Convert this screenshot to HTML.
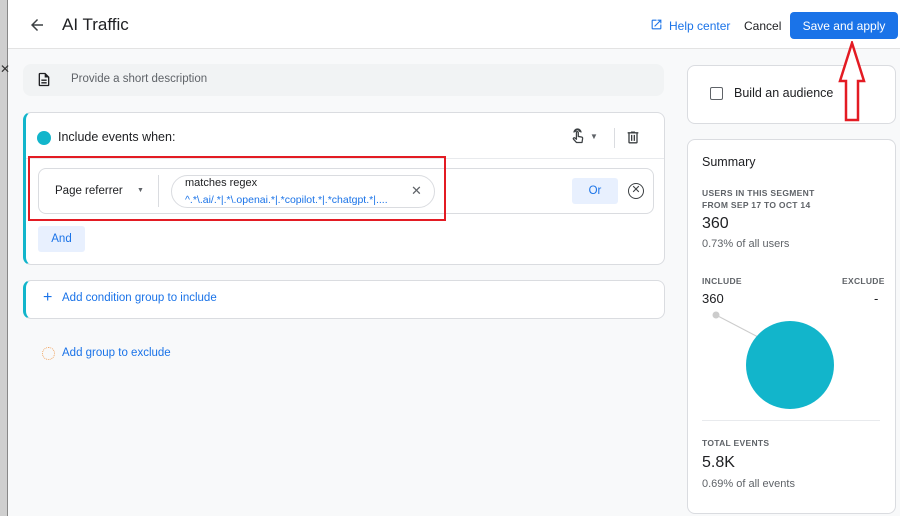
<!DOCTYPE html>
<html><head><style>
*{box-sizing:border-box;margin:0;padding:0}
body{width:900px;height:516px;overflow:hidden;background:#f8f9fa;font-family:"Liberation Sans",Arial,sans-serif;position:relative;color:#202124}
.a{position:absolute}
.card{position:absolute;background:#fff;border:1px solid #dadce0;border-radius:8px}
.blue{color:#1a73e8}
.cap{font-size:8.5px;color:#5f6368;letter-spacing:.3px;font-weight:bold}
</style></head><body>
<div class="a" style="left:0;top:0;width:8px;height:516px;background:#cfcfcf;border-right:1px solid #888"></div>
<div class="a" style="left:0;top:62px;font-size:12px;color:#333">✕</div>
<div class="a" style="left:8px;top:0;width:892px;height:49px;background:#fff;border-bottom:1px solid #e3e3e3"></div>
<svg class="a" style="left:28px;top:16px" width="18" height="18" viewBox="0 0 24 24"><path d="M20 11H7.8l5.6-5.6L12 4l-8 8 8 8 1.4-1.4L7.8 13H20z" fill="#3c4043"/></svg>
<div class="a" style="left:62px;top:15px;font-size:17px">AI Traffic</div>
<svg class="a" style="left:650px;top:18px" width="13" height="13" viewBox="0 0 24 24"><path d="M19 19H5V5h7V3H5a2 2 0 0 0-2 2v14a2 2 0 0 0 2 2h14a2 2 0 0 0 2-2v-7h-2zM14 3v2h3.6l-9.8 9.8 1.4 1.4L19 6.4V10h2V3z" fill="#1a73e8"/></svg>
<div class="a blue" style="left:669px;top:19px;font-size:12px">Help center</div>
<div class="a" style="left:744px;top:19px;font-size:12px">Cancel</div>
<div class="a" style="left:790px;top:12px;width:108px;height:27px;background:#1a73e8;border-radius:4px;color:#fff;font-size:12px;text-align:center;line-height:28px">Save and apply</div>

<div class="a" style="left:23px;top:64px;width:641px;height:32px;background:#f1f3f4;border-radius:8px"></div>
<svg class="a" style="left:36px;top:71px" width="16" height="17" viewBox="0 0 24 24"><path d="M14 2H6a2 2 0 0 0-2 2v16a2 2 0 0 0 2 2h12a2 2 0 0 0 2-2V8zm4 18H6V4h7v5h5zM8 12h8v2H8zm0 4h8v2H8z" fill="#202124"/></svg>
<div class="a" style="left:71px;top:73px;font-size:11.5px;color:#5f6368">Provide a short description</div>

<div class="card" style="left:23px;top:112px;width:642px;height:153px;border-left:3px solid #12b5cb"></div>
<div class="a" style="left:37px;top:131px;width:14px;height:14px;border-radius:50%;background:#12b5cb"></div>
<div class="a" style="left:58px;top:130px;font-size:12.5px">Include events when:</div>
<svg class="a" style="left:569px;top:128px" width="17" height="19" viewBox="0 0 24 26"><path d="M9 5a3 3 0 1 1 6 0M7 6a5 5 0 0 1 10 0M10.5 20l-4-4.5a1.3 1.3 0 0 1 1.9-1.8L10.5 15.5V6a1.3 1.3 0 0 1 2.6 0v5.5l4.5.8a2 2 0 0 1 1.6 2.2l-.8 5.5H10.5z" fill="none" stroke="#3c4043" stroke-width="1.8" stroke-linejoin="round"/></svg>
<div class="a" style="left:590px;top:132px;font-size:8px;color:#5f6368">▼</div>
<div class="a" style="left:614px;top:128px;width:1px;height:20px;background:#dadce0"></div>
<svg class="a" style="left:625px;top:129px" width="16" height="17" viewBox="0 0 24 24"><path d="M15 4V3H9v1H4v2h1v13a2 2 0 0 0 2 2h10a2 2 0 0 0 2-2V6h1V4zm2 15H7V6h10zM9 8h2v9H9zm4 0h2v9h-2z" fill="#3c4043"/></svg>
<div class="a" style="left:26px;top:158px;width:638px;height:1px;background:#e8eaed"></div>

<div class="a" style="left:38px;top:168px;width:616px;height:46px;border:1px solid #dadce0;border-radius:8px;background:#fff"></div>
<div class="a" style="left:55px;top:185px;font-size:11.5px">Page referrer</div>
<div class="a" style="left:137px;top:187px;font-size:7px;color:#5f6368">▼</div>
<div class="a" style="left:158px;top:175px;width:1px;height:32px;background:#dadce0"></div>
<div class="a" style="left:171px;top:175px;width:264px;height:33px;border:1px solid #dadce0;border-radius:17px"></div>
<div class="a" style="left:185px;top:177px;font-size:11px">matches regex</div>
<div class="a blue" style="left:185px;top:194px;font-size:10.5px">^.*\.ai/.*|.*\.openai.*|.*copilot.*|.*chatgpt.*|....</div>
<div class="a" style="left:411px;top:183px;font-size:13px;color:#5f6368">✕</div>
<div class="a blue" style="left:572px;top:178px;width:46px;height:26px;background:#e8f0fe;border-radius:3px;text-align:center;line-height:26px;font-size:11.5px">Or</div>
<div class="a" style="left:628px;top:183px;width:16px;height:16px;border:1.5px solid #3c4043;border-radius:50%;font-size:11px;line-height:13px;text-align:center;color:#3c4043">✕</div>
<div class="a" style="left:28px;top:156px;width:418px;height:65px;border:2.5px solid #e31b23"></div>
<div class="a blue" style="left:38px;top:226px;width:47px;height:26px;background:#e8f0fe;border-radius:3px;text-align:center;line-height:26px;font-size:11.5px">And</div>

<div class="card" style="left:23px;top:280px;width:642px;height:39px;border-left:3px solid #12b5cb"></div>
<div class="a blue" style="left:43px;top:289px;font-size:16px">+</div>
<div class="a blue" style="left:62px;top:292px;font-size:11.5px">Add condition group to include</div>
<div class="a" style="left:42px;top:347px;width:13px;height:13px;border:1.5px dotted #f0a868;border-radius:50%"></div>
<div class="a blue" style="left:62px;top:347px;font-size:11.5px">Add group to exclude</div>

<div class="card" style="left:687px;top:65px;width:209px;height:59px"></div>
<div class="a" style="left:710px;top:87px;width:13px;height:13px;border:1.5px solid #5f6368;border-radius:2px"></div>
<div class="a" style="left:734px;top:86px;font-size:12.5px">Build an audience</div>
<svg class="a" style="left:838px;top:41px" width="28" height="82" viewBox="0 0 28 82"><path d="M14 2 L26 40 L20 40 L20 79 L8 79 L8 40 L2 40 Z" fill="#fff" stroke="#e31b23" stroke-width="2.5"/></svg>

<div class="card" style="left:687px;top:139px;width:209px;height:375px"></div>
<div class="a" style="left:702px;top:155px;font-size:12.5px">Summary</div>
<div class="a cap" style="left:702px;top:187px;line-height:12px">USERS IN THIS SEGMENT<br>FROM SEP 17 TO OCT 14</div>
<div class="a" style="left:702px;top:215px;font-size:16px">360</div>
<div class="a" style="left:702px;top:238px;font-size:11px;color:#5f6368">0.73% of all users</div>
<div class="a cap" style="left:702px;top:276px">INCLUDE</div>
<div class="a cap" style="left:842px;top:276px">EXCLUDE</div>
<div class="a" style="left:702px;top:291px;font-size:13px">360</div>
<div class="a" style="left:874px;top:291px;font-size:13px">-</div>
<svg class="a" style="left:700px;top:305px" width="180" height="110" viewBox="0 0 180 110"><line x1="16" y1="10" x2="60" y2="33" stroke="#ccc" stroke-width="1"/><circle cx="16" cy="10" r="3.5" fill="#ccc"/><circle cx="90" cy="60" r="44" fill="#12b5cb"/></svg>
<div class="a" style="left:702px;top:420px;width:178px;height:1px;background:#e8eaed"></div>
<div class="a cap" style="left:702px;top:438px">TOTAL EVENTS</div>
<div class="a" style="left:702px;top:454px;font-size:16px">5.8K</div>
<div class="a" style="left:702px;top:478px;font-size:11px;color:#5f6368">0.69% of all events</div>
</body></html>
